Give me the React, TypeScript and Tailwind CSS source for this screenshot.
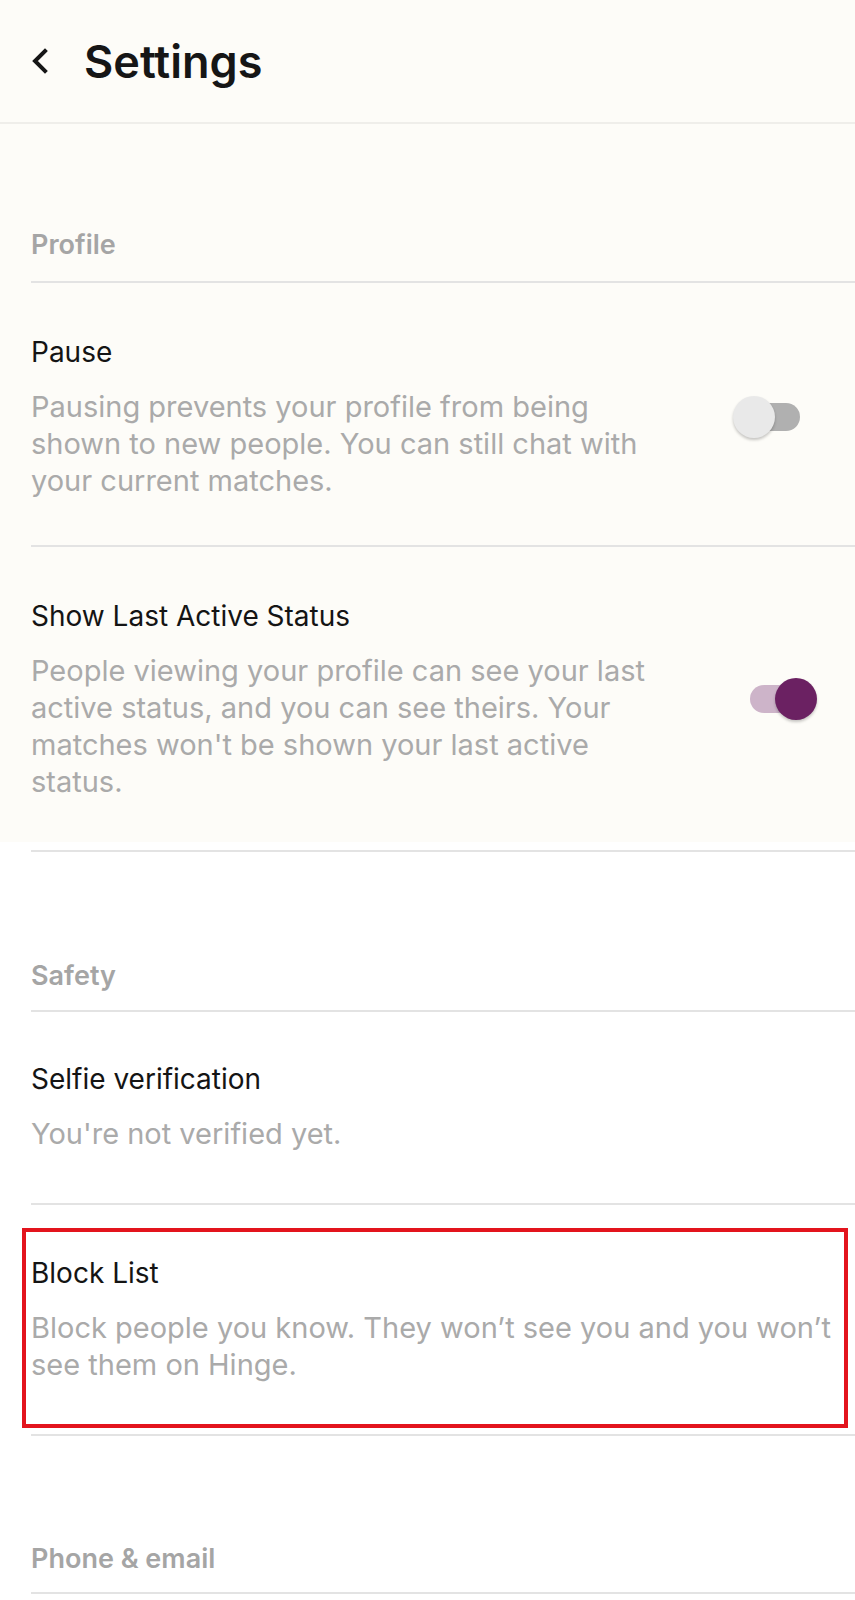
import React from 'react';

const font = "font-['Inter','Noto_Sans',sans-serif]";

const Toggle: React.FC<{ on?: boolean; className?: string }> = ({ on, className = '' }) => (
  <div className={`relative flex h-[44px] w-[67px] shrink-0 items-center ${className}`}>
    <div
      className={`h-[28px] w-[58px] rounded-full ${on ? 'mr-auto bg-[#cdb4c9]' : 'ml-auto bg-[#b0b0b0]'}`}
    />
    <div
      className={`absolute top-[1px] h-[42px] w-[42px] rounded-full shadow-[0_2px_3px_rgba(0,0,0,0.22)] ${
        on ? 'right-0 bg-[#6b2162]' : 'left-0 bg-[#e9e9e9]'
      }`}
    />
  </div>
);

const SectionHeader: React.FC<{ label: string; pt?: string; pb?: string }> = ({
  label,
  pt = 'pt-[103px]',
  pb = 'pb-[17px]',
}) => (
  <div className={`ml-[31px] border-b-2 border-[#e3e3e3] ${pt} ${pb}`}>
    <h2 className="text-[27px] font-semibold leading-[36px] text-[#a5a5a5]">{label}</h2>
  </div>
);

const Row: React.FC<{
  title: string;
  lines: string[];
  children?: React.ReactNode;
  border?: boolean;
  pt?: string;
  pb?: string;
}> = ({ title, lines, children, border = true, pt = 'pt-[51px]', pb = 'pb-[48px]' }) => (
  <div className={`relative ml-[31px] flex items-center ${pt} ${pb} ${border ? 'border-b-2 border-[#e3e3e3]' : ''}`}>
    <div className="w-[640px] shrink-0">
      <h3 className="text-[28px] leading-[36px] text-[#141414]">{title}</h3>
      <p className="mt-[18px] whitespace-nowrap text-[29px] leading-[37px] text-[#aaaaaa]">
        {lines.map((l, i) => (
          <React.Fragment key={i}>
            {i > 0 && <br />}
            {l}
          </React.Fragment>
        ))}
      </p>
    </div>
    {children}
  </div>
);

export default function App() {
  return (
    <div className={`min-h-[1600px] w-[855px] overflow-hidden bg-white ${font}`}>
      <div className="bg-[#fdfcf8]">
        <header className="flex h-[124px] items-center border-b-2 border-[#efeeea] pl-[31px]">
          <svg width="18" height="26" viewBox="0 0 18 26" className="shrink-0">
            <path d="M14 3 L4 13 L14 23" fill="none" stroke="#161616" strokeWidth="4" strokeLinecap="square" />
          </svg>
          <h1 className="ml-[35px] text-[45px] font-semibold leading-none text-[#161616]">Settings</h1>
        </header>

        <SectionHeader label="Profile" pb="pb-[18px]" />

        <Row
          title="Pause"
          lines={[
            'Pausing prevents your profile from being',
            'shown to new people. You can still chat with',
            'your current matches.',
          ]}
          pb="pb-[46px]"
        >
          <Toggle className="ml-[62px]" />
        </Row>

        <Row
          title="Show Last Active Status"
          lines={[
            'People viewing your profile can see your last',
            'active status, and you can see theirs. Your',
            "matches won't be shown your last active",
            'status.',
          ]}
          border={false}
          pb="pb-[42px]"
        >
          <Toggle on className="ml-[79px]" />
        </Row>
      </div>

      <div className="ml-[31px] mt-[8px] h-[2px] bg-[#e3e3e3]" />

      <SectionHeader label="Safety" pt="pt-[106px]" pb="pb-[16px]" />

      <Row title="Selfie verification" lines={["You're not verified yet."]} pt="pt-[49px]" pb="pb-[51px]" />

      <Row
        title="Block List"
        lines={['Block people you know. They won’t see you and you won’t', 'see them on Hinge.']}
        pt="pt-[50px]"
        pb="pb-[51px]"
      >
        <div className="absolute top-[23px] bottom-[6px] left-[-9px] right-[7px] border-4 border-[#e3141d]" />
      </Row>

      <SectionHeader label="Phone & email" pt="pt-[105px]" pb="pb-[15px]" />
    </div>
  );
}
